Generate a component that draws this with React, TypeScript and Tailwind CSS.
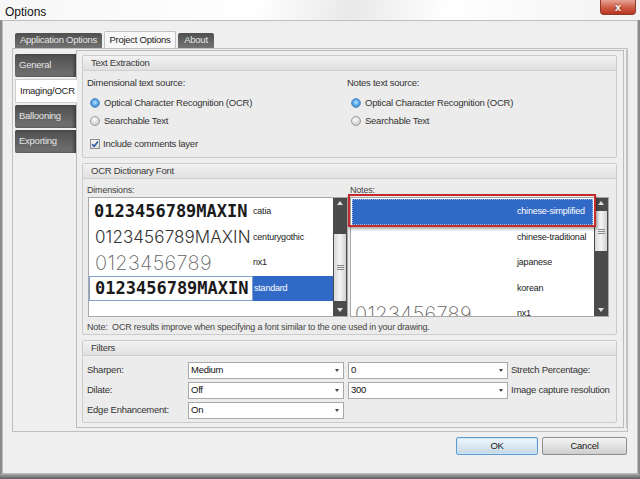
const ui = { fontFamily: '"Liberation Sans", Arial, sans-serif' };
const t = "text-[9.5px] tracking-[-0.25px]";
const ts = "text-[9px] tracking-[-0.2px]";

function Radio({ on }: { on?: boolean }) {
  return (
    <span
      className={
        "inline-block w-[10px] h-[10px] rounded-full border shrink-0 " +
        (on
          ? "border-[#5f8fc4] bg-[radial-gradient(circle_at_50%_45%,#bfe3ff_0,#5aaef0_45%,#3b82c8_70%,#dfe7ef_72%)]"
          : "border-[#9a9a9a] bg-[radial-gradient(circle_at_40%_35%,#ffffff_0,#d6d6d6_60%,#bdbdbd_100%)]")
      }
    />
  );
}

function GroupBox({ title, className, children }: { title: string; className?: string; children: React.ReactNode }) {
  return (
    <div className={"border border-[#cbcbcb] rounded-[2px] bg-[#ececec] flex flex-col shrink-0 " + (className ?? "")}>
      <div className={"h-[15px] shrink-0 border-b border-[#cfcfcf] bg-gradient-to-b from-[#f2f2f2] to-[#e0e0e0] px-[8px] flex items-center text-[#3a3a3a] " + t}>
        {title}
      </div>
      {children}
    </div>
  );
}

function ScrollBar({ thumbTop, thumbH }: { thumbTop: number; thumbH: number }) {
  return (
    <div className="w-[14px] h-full bg-[#4b4b4b] relative shrink-0">
      <div className="absolute top-[3px] left-0 w-full flex justify-center">
        <span className="w-0 h-0 border-l-[3px] border-r-[3px] border-b-[4px] border-l-transparent border-r-transparent border-b-[#e0e0e0]" />
      </div>
      <div
        className="absolute left-[1px] right-[1px] bg-gradient-to-r from-[#d8d8d8] via-[#f4f4f4] to-[#d0d0d0] flex flex-col items-center justify-center gap-[1px]"
        style={{ top: thumbTop, height: thumbH }}
      >
        <span className="w-[7px] h-px bg-[#8a8a8a]" />
        <span className="w-[7px] h-px bg-[#8a8a8a]" />
        <span className="w-[7px] h-px bg-[#8a8a8a]" />
      </div>
      <div className="absolute bottom-[4px] left-0 w-full flex justify-center">
        <span className="w-0 h-0 border-l-[3px] border-r-[3px] border-t-[4px] border-l-transparent border-r-transparent border-t-[#e0e0e0]" />
      </div>
    </div>
  );
}

function Combo({ value, w }: { value: string; w: string }) {
  return (
    <div className={"h-[17px] shrink-0 bg-white border border-[#a9a9a9] flex items-center justify-between pl-[2px] pr-[4px] text-[#111] " + t + " " + w}>
      <span>{value}</span>
      <span className="w-0 h-0 border-l-[2.5px] border-r-[2.5px] border-t-[3px] border-l-transparent border-r-transparent border-t-[#444]" />
    </div>
  );
}

function DarkTab({ label, className }: { label: string; className?: string }) {
  return (
    <div className={"bg-gradient-to-b from-[#4f4f4f] to-[#737373] text-[#e6e6e6] flex items-center whitespace-nowrap " + t + " " + (className ?? "")}>
      {label}
    </div>
  );
}

function NoteRow({ label, sample, selected }: { label: string; sample?: string; selected?: boolean }) {
  if (selected) {
    return (
      <div className="h-[25.5px] shrink-0 flex items-center mx-[1px] bg-[#3169c6] border border-dotted border-[#9fb8e0]">
        <span className="w-[164px] shrink-0" />
        <span className={"text-white " + ts}>{label}</span>
      </div>
    );
  }
  return (
    <div className="h-[25.5px] shrink-0 flex items-center pl-[1px]">
      <span
        style={{ fontFamily: '"Inter", "DejaVu Sans", sans-serif' }}
        className="w-[165px] shrink-0 pl-[3px] text-[20px] font-extralight text-[#666] tracking-[0.3px] leading-none"
      >
        {sample}
      </span>
      <span className={"text-[#222] " + ts}>{label}</span>
    </div>
  );
}

export default function App() {
  const mono = { fontFamily: '"DejaVu Sans Mono", monospace' };
  const thin = { fontFamily: '"Inter", "DejaVu Sans", sans-serif' };

  return (
    <div style={ui} className="w-[640px] h-[479px] bg-[#8b8b8b] flex flex-col overflow-hidden">
      {/* Title bar */}
      <div className="h-[20px] shrink-0 bg-[linear-gradient(100deg,#f7f7f7_0%,#ffffff_40%,#e9e9e9_55%,#ffffff_70%,#f2f2f2_100%)] flex items-start justify-between pl-[5px] pr-[4px]">
        <span className="text-[12px] text-[#111] mt-[3px]">Options</span>
        <div className="w-[36px] h-[15px] rounded-b-[4px] border border-[#8e3a2c] border-t-0 bg-gradient-to-b from-[#e5a394] via-[#d0604b] to-[#b8331f] flex items-center justify-center">
          <span className="text-white font-bold text-[11px] leading-none [text-shadow:0_0_2px_#5a1a10]">x</span>
        </div>
      </div>

      {/* Client area */}
      <div className="flex-1 mx-[2px] border border-[#bdbdbd] bg-[#efefef] flex flex-col">
        <div className="flex-1 flex flex-col pl-[9px] pr-[9px] pt-[10px]">
          {/* Top tabs */}
          <div className="flex items-end h-[17px] pl-[3px] gap-[2px]">
            <DarkTab label="Application Options" className="w-[87px] h-[15px] justify-center rounded-t-[2px]" />
            <div className={"w-[72px] h-[17px] bg-[#f7f7f7] border border-b-0 border-[#c2c2c2] text-[#222] flex items-center justify-center rounded-t-[2px] whitespace-nowrap " + t}>
              Project Options
            </div>
            <DarkTab label="About" className="w-[36px] h-[15px] justify-center rounded-t-[2px]" />
          </div>

          {/* Tab pane */}
          <div className="h-[384px] border border-[#c0c0c0] bg-[#efefef] flex pt-[1px] pr-[3px] pb-[3px]">
            {/* Vertical tabs */}
            <div className="w-[63px] shrink-0 flex flex-col pl-[2px] pt-[4px] gap-[2px]">
              <DarkTab label="General" className="h-[23px] pl-[4px] rounded-l-[2px] shadow-[inset_-2px_0_3px_#3e3e3e]" />
              <div className={"h-[24px] bg-white border border-[#cfcfcf] border-r-0 text-[#222] flex items-center pl-[4px] -mr-[1px] relative z-10 whitespace-nowrap " + t}>
                Imaging/OCR
              </div>
              <DarkTab label="Ballooning" className="h-[23px] pl-[4px] rounded-l-[2px] shadow-[inset_-2px_0_3px_#3e3e3e]" />
              <DarkTab label="Exporting" className="h-[23px] pl-[4px] rounded-l-[2px] shadow-[inset_-2px_0_3px_#3e3e3e]" />
            </div>

            {/* Content */}
            <div className="flex-1 border border-[#bcbcbc] bg-[#efefef] flex flex-col gap-[5px] pt-[4px] pl-[5px] pr-[6px] shadow-[2px_0_0_#efefef,3px_0_0_#c4c4c4]">
              {/* Text Extraction */}
              <GroupBox title="Text Extraction" className="h-[103px]">
                <div className={"flex pl-[4px] pt-[6px] text-[#333] " + t}>
                  <div className="w-[260px] flex flex-col">
                    <span className="h-[12px] leading-[12px]">Dimensional text source:</span>
                    <div className="flex items-center gap-[4px] mt-[8px] pl-[3px] h-[12px]">
                      <Radio on />
                      <span>Optical Character Recognition (OCR)</span>
                    </div>
                    <div className="flex items-center gap-[4px] mt-[6px] pl-[3px] h-[12px]">
                      <Radio />
                      <span>Searchable Text</span>
                    </div>
                    <div className="flex items-center gap-[3px] mt-[11px] pl-[3px] h-[12px]">
                      <span className="w-[10px] h-[10px] border border-[#8f8f8f] bg-gradient-to-b from-[#f4f4f4] to-[#dcdcdc] flex items-center justify-center">
                        <svg width="8" height="8" viewBox="0 0 8 8">
                          <path d="M1 4.2 L3.1 6.3 L7 1.6" stroke="#2a58a8" strokeWidth="1.6" fill="none" />
                        </svg>
                      </span>
                      <span>Include comments layer</span>
                    </div>
                  </div>
                  <div className="flex flex-col">
                    <span className="h-[12px] leading-[12px]">Notes text source:</span>
                    <div className="flex items-center gap-[4px] mt-[8px] pl-[4px] h-[12px]">
                      <Radio on />
                      <span>Optical Character Recognition (OCR)</span>
                    </div>
                    <div className="flex items-center gap-[4px] mt-[6px] pl-[4px] h-[12px]">
                      <Radio />
                      <span>Searchable Text</span>
                    </div>
                  </div>
                </div>
              </GroupBox>

              {/* OCR Dictionary Font */}
              <GroupBox title="OCR Dictionary Font" className="h-[172px]">
                <div className="flex pl-[4px] pt-[5px] gap-[2px] text-[#444]">
                  <div className="flex flex-col w-[261px]">
                    <span className={"h-[12px] leading-[12px] " + ts}>Dimensions:</span>
                    <div className="mt-[1px] ml-[1px] h-[120px] border border-[#a8a8a8] bg-white flex">
                      <div className="flex-1 flex flex-col pt-[1px]">
                        <div className="h-[25.5px] shrink-0 flex items-center">
                          <span style={mono} className="w-[164px] shrink-0 pl-[5px] text-[17px] font-bold text-[#1a1a1a] leading-none">0123456789MAXIN</span>
                          <span className={"text-[#222] " + ts}>catia</span>
                        </div>
                        <div className="h-[25.5px] shrink-0 flex items-center">
                          <span style={thin} className="w-[164px] shrink-0 pl-[6px] text-[17px] font-light text-[#333] tracking-[0.1px] leading-none">0123456789MAXIN</span>
                          <span className={"text-[#222] " + ts}>centurygothic</span>
                        </div>
                        <div className="h-[25.5px] shrink-0 flex items-center">
                          <span style={thin} className="w-[164px] shrink-0 pl-[6px] text-[20px] font-extralight text-[#666] tracking-[0.3px] leading-none">0123456789</span>
                          <span className={"text-[#222] " + ts}>nx1</span>
                        </div>
                        <div className="h-[25.5px] shrink-0 flex items-stretch">
                          <span style={mono} className="w-[164px] shrink-0 pl-[5px] text-[17px] font-bold text-[#1a1a1a] leading-none border border-[#7da2ce] flex items-center">0123456789MAXIN</span>
                          <span className={"flex-1 bg-[#3169c6] text-white flex items-center pl-[1px] " + ts}>standard</span>
                        </div>
                      </div>
                      <ScrollBar thumbTop={36} thumbH={67} />
                    </div>
                  </div>
                  <div className="flex flex-col w-[259px]">
                    <span className={"h-[12px] leading-[12px] " + ts}>Notes:</span>
                    <div className="mt-[1px] h-[120px] border border-[#a8a8a8] bg-white flex relative">
                      <div className="flex-1 flex flex-col pt-[1px] overflow-hidden">
                        <NoteRow label="chinese-simplified" selected />
                        <NoteRow label="chinese-traditional" />
                        <NoteRow label="japanese" />
                        <NoteRow label="korean" />
                        <NoteRow label="nx1" sample="0123456789" />
                      </div>
                      <ScrollBar thumbTop={13} thumbH={40} />
                      {/* highlight */}
                      <div className="absolute -left-[3px] -top-[4px] w-[248px] h-[33px] border-2 border-[#c62a2a] shadow-[1px_2px_3px_rgba(0,0,0,0.35)]" />
                    </div>
                  </div>
                </div>
                <div className={"pl-[4px] mt-[4px] text-[#444] " + ts}>
                  Note:&nbsp; OCR results improve when specifying a font similar to the one used in your drawing.
                </div>
              </GroupBox>

              {/* Filters */}
              <GroupBox title="Filters" className="h-[83px]">
                <div className={"flex flex-col pl-[4px] pt-[6px] gap-[3px] text-[#333] " + t}>
                  <div className="flex items-center whitespace-nowrap">
                    <span className="w-[101px] shrink-0">Sharpen:</span>
                    <Combo value="Medium" w="w-[156px]" />
                    <span className="w-[4px] shrink-0" />
                    <Combo value="0" w="w-[160px]" />
                    <span className="ml-[3px]">Stretch Percentage:</span>
                  </div>
                  <div className="flex items-center whitespace-nowrap">
                    <span className="w-[101px] shrink-0">Dilate:</span>
                    <Combo value="Off" w="w-[156px]" />
                    <span className="w-[4px] shrink-0" />
                    <Combo value="300" w="w-[160px]" />
                    <span className="ml-[3px]">Image capture resolution</span>
                  </div>
                  <div className="flex items-center whitespace-nowrap">
                    <span className="w-[101px] shrink-0">Edge Enhancement:</span>
                    <Combo value="On" w="w-[156px]" />
                  </div>
                </div>
              </GroupBox>
            </div>
          </div>

          {/* Buttons */}
          <div className="flex justify-end gap-[4px] mt-[5px] pr-[1px]">
            <button className={"w-[82px] h-[18px] border border-[#5d9bd0] rounded-[2px] bg-gradient-to-b from-[#eef6fc] via-[#dbe8f2] to-[#c4d6e4] text-[#222] shadow-[inset_0_0_0_1px_#cfe6f7] " + t}>
              OK
            </button>
            <button className={"w-[85px] h-[18px] border border-[#8f8f8f] rounded-[2px] bg-gradient-to-b from-[#f4f4f4] via-[#e3e3e3] to-[#cdcdcd] text-[#222] " + t}>
              Cancel
            </button>
          </div>
        </div>
      </div>

      {/* Bottom frame */}
      <div className="h-[5px] shrink-0 bg-gradient-to-b from-[#a8a8a8] to-[#5e5e5e]" />
    </div>
  );
}
